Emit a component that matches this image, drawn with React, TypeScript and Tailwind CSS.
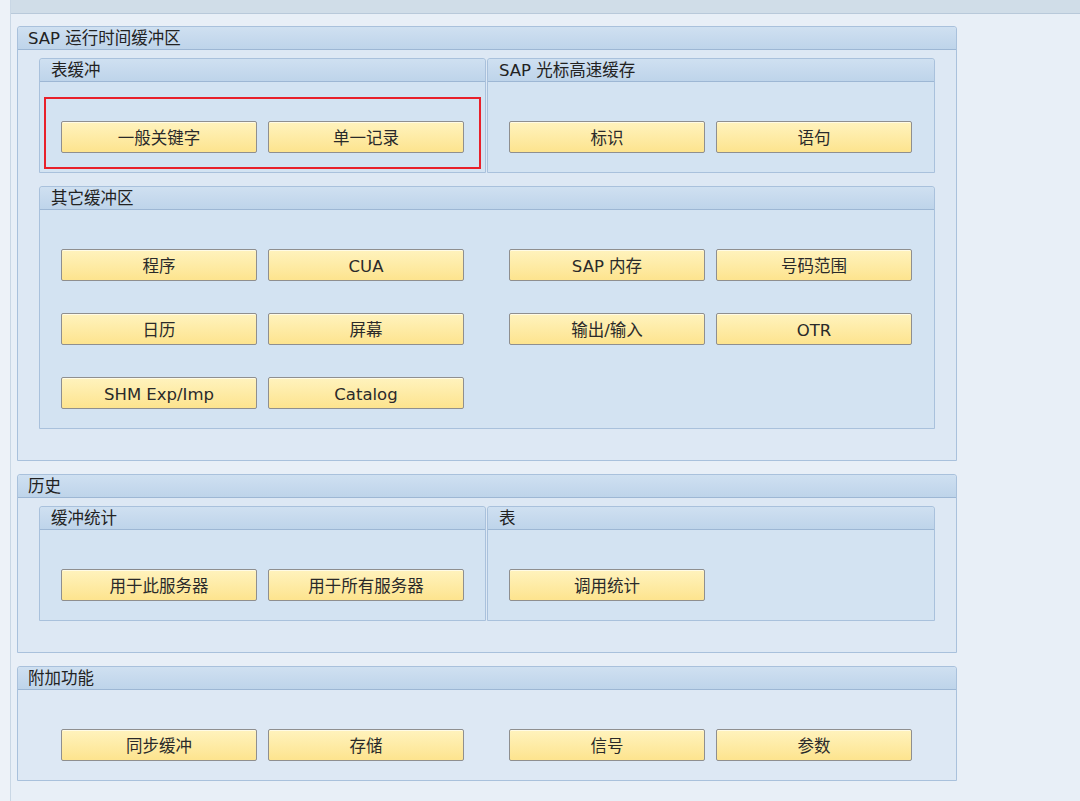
import type { ReactNode } from 'react'

const font = { fontFamily: '"DejaVu Sans", "Noto Sans CJK SC", sans-serif' }

function SapButton({ label }: { label: string }) {
  return (
    <button className="w-[196px] h-[32px] pt-[5px] rounded-[2px] border border-[#8f8f8f] bg-gradient-to-b from-[#fff3bd] to-[#fde48e] text-[16.5px] text-[#2a2a2a] shadow-[inset_0_1px_0_#fffbe6] flex items-center justify-center">
      {label}
    </button>
  )
}

// two buttons side by side (one column pair)
function Pair({ items }: { items: string[] }) {
  return (
    <div className="flex gap-[11px] w-[403px]">
      {items.map((it) => (
        <SapButton key={it} label={it} />
      ))}
    </div>
  )
}

function Header({ title, outer }: { title: string; outer?: boolean }) {
  return (
    <div
      className={`h-[23px] pt-[3px] flex items-center border-b border-[#9db7d4] bg-gradient-to-b from-[#cfe0f1] to-[#bed4ea] text-[16.5px] text-[#222] rounded-t-[3px] ${
        outer ? 'pl-[10px]' : 'pl-[11px]'
      }`}
    >
      {title}
    </div>
  )
}

function Inner({ title, width, children }: { title: string; width: string; children: ReactNode }) {
  return (
    <div className={`${width} border border-[#a9c1dc] rounded-t-[3px] bg-[#d3e3f2]`}>
      <Header title={title} />
      <div className="pl-[21px] pt-[39px] pb-[19px] flex flex-col gap-[32px]">{children}</div>
    </div>
  )
}

function Outer({ title, children }: { title: string; children: ReactNode }) {
  return (
    <div className="w-[940px] border border-[#a9c1dc] rounded-t-[3px] bg-[#dde8f4]">
      <Header title={title} outer />
      {children}
    </div>
  )
}

export default function App() {
  return (
    <div className="flex min-h-screen w-[1080px] h-[801px] overflow-hidden bg-[#e8eff7]" style={font}>
      {/* left strip */}
      <div className="w-[11px] shrink-0 bg-[#edf2f8] border-r border-[#c9d7e5]" />

      <div className="flex-1">
        {/* top toolbar */}
        <div className="h-[14px] bg-[#d0dde8] border-b border-[#b8c9da]" />

        <div className="pl-[6px] pt-[12px] flex flex-col gap-[13px]">
          <Outer title="SAP 运行时间缓冲区">
            <div className="pl-[21px] pt-[8px] pb-[31px] flex flex-col gap-[13px]">
              <div className="flex gap-[1px]">
                <div className="relative">
                  <Inner title="表缓冲" width="w-[447px]">
                    <Pair items={['一般关键字', '单一记录']} />
                  </Inner>
                  {/* red highlight */}
                  <div className="absolute left-[5px] top-[39px] w-[437px] h-[72px] border-2 border-[#e8202a]" />
                </div>
                <Inner title="SAP 光标高速缓存" width="w-[448px]">
                  <Pair items={['标识', '语句']} />
                </Inner>
              </div>
              <Inner title="其它缓冲区" width="w-[896px]">
                <div className="flex gap-[45px]">
                  <Pair items={['程序', 'CUA']} />
                  <Pair items={['SAP 内存', '号码范围']} />
                </div>
                <div className="flex gap-[45px]">
                  <Pair items={['日历', '屏幕']} />
                  <Pair items={['输出/输入', 'OTR']} />
                </div>
                <div className="flex gap-[45px]">
                  <Pair items={['SHM Exp/Imp', 'Catalog']} />
                </div>
              </Inner>
            </div>
          </Outer>

          <Outer title="历史">
            <div className="pl-[21px] pt-[8px] pb-[31px]">
              <div className="flex gap-[1px]">
                <Inner title="缓冲统计" width="w-[447px]">
                  <Pair items={['用于此服务器', '用于所有服务器']} />
                </Inner>
                <Inner title="表" width="w-[448px]">
                  <Pair items={['调用统计']} />
                </Inner>
              </div>
            </div>
          </Outer>

          <Outer title="附加功能">
            <div className="pl-[43px] pt-[39px] pb-[19px] flex gap-[45px]">
              <Pair items={['同步缓冲', '存储']} />
              <Pair items={['信号', '参数']} />
            </div>
          </Outer>
        </div>
      </div>
    </div>
  )
}
